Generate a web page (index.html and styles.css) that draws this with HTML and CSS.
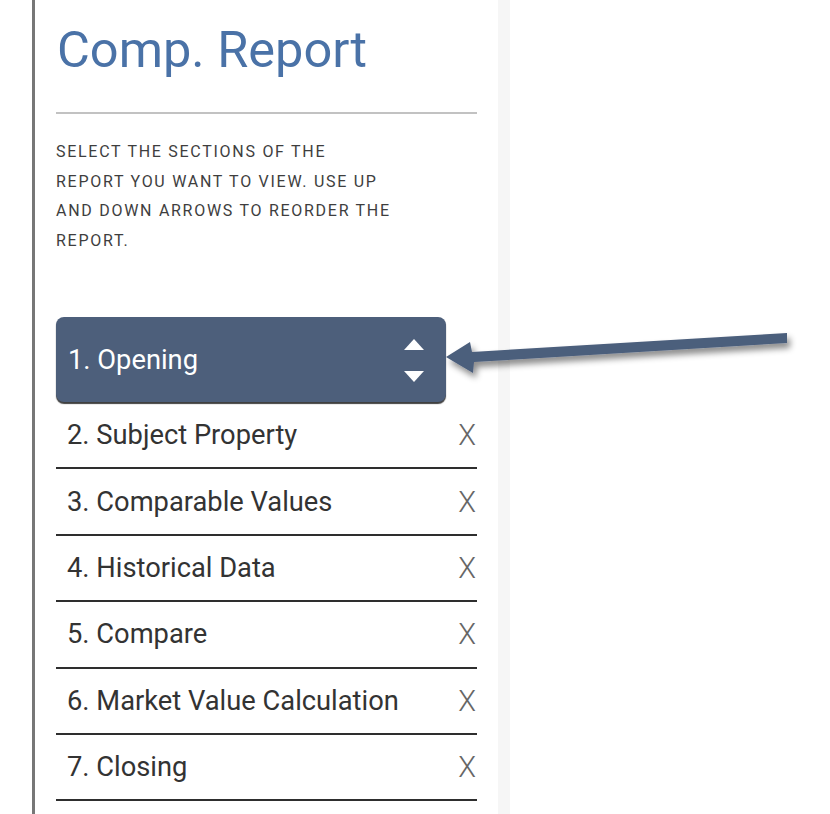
FILE: index.html
```html
<!DOCTYPE html>
<html lang="en">
<head>
<meta charset="utf-8">
<title>Comp. Report</title>
<link rel="stylesheet" href="styles.css">
</head>
<body>
<div class="page">
  <aside class="sidebar">
    <div class="panel">
      <h1 class="title">Comp. Report</h1>
      <hr class="rule">
      <p class="hint">SELECT THE SECTIONS OF THE REPORT YOU WANT TO VIEW. USE UP AND DOWN ARROWS TO REORDER THE REPORT.</p>
      <ul class="sections">
        <li class="item item-active">
          <span class="label">1. Opening</span>
          <span class="sorter">
            <svg class="tri" width="20" height="11" viewBox="0 0 20 11"><polygon points="10,0 20,11 0,11" fill="#fff"/></svg>
            <svg class="tri" width="20" height="11" viewBox="0 0 20 11"><polygon points="0,0 20,0 10,11" fill="#fff"/></svg>
          </span>
        </li>
        <li class="item"><span class="label">2. Subject Property</span><span class="remove">X</span></li>
        <li class="item"><span class="label">3. Comparable Values</span><span class="remove">X</span></li>
        <li class="item"><span class="label">4. Historical Data</span><span class="remove">X</span></li>
        <li class="item"><span class="label">5. Compare</span><span class="remove">X</span></li>
        <li class="item"><span class="label">6. Market Value Calculation</span><span class="remove">X</span></li>
        <li class="item"><span class="label">7. Closing</span><span class="remove">X</span></li>
      </ul>
    </div>
  </aside>
  <div class="gutter"></div>
  <main class="main"></main>
</div>
<svg class="callout" width="830" height="814" viewBox="0 0 830 814">
  <defs>
    <filter id="sh" x="-10%" y="-50%" width="120%" height="250%">
      <feDropShadow dx="3" dy="5" stdDeviation="3" flood-color="#000" flood-opacity="0.45"/>
    </filter>
  </defs>
  <polygon filter="url(#sh)" fill="#4b5e7c" points="446,357 470,342 472,352 787,333 787,343 474,362 473,373"/>
</svg>
</body>
</html>
```
FILE: styles.css
```css
html, body {
  margin: 0;
  padding: 0;
  background: #ffffff;
}
body {
  font-family: Roboto, "Liberation Sans", Arial, sans-serif;
  width: 830px;
  height: 814px;
  overflow: hidden;
  position: relative;
}
.page {
  display: flex;
  height: 814px;
}
.sidebar {
  margin-left: 32px;
  width: 463px;
  border-left: 3px solid #777777;
  background: #ffffff;
}
.panel {
  width: 421px;
  padding: 25px 0 0 21px;
}
.title {
  margin: 0;
  font-size: 50.5px;
  line-height: 50px;
  font-weight: 400;
  color: #4a72a7;
  padding-left: 1px;
}
.rule {
  margin: 37px 0 0 0;
  border: 0;
  height: 2px;
  background: #c2c2c2;
}
.hint {
  margin: 23px 0 0 0;
  width: 340px;
  font-size: 16px;
  line-height: 29.5px;
  letter-spacing: 1.72px;
  color: #3e3e3e;
}
.sections {
  list-style: none;
  margin: 62px 0 0 0;
  padding: 0;
}
.item {
  display: flex;
  align-items: center;
  justify-content: space-between;
  height: 64.4px;
  border-bottom: 2px solid #2e2e2e;
  padding: 0 1px 0 11px;
  font-size: 27.3px;
  color: #333333;
}
.item-active {
  width: 390px;
  height: 85px;
  box-sizing: border-box;
  border: 0;
  border-radius: 8px;
  background: #4d5f7b;
  color: #ffffff;
  box-shadow: 0 2px 1px rgba(0, 0, 0, 0.75);
  padding: 0 22px 0 12px;
  margin-bottom: 1px;
}
.label {
  white-space: nowrap;
}
.sorter {
  display: flex;
  flex-direction: column;
  gap: 21px;
  margin-top: 2px;
}
.tri {
  display: block;
}
.remove {
  font-size: 29px;
  font-weight: 300;
  color: #666666;
}
.gutter {
  width: 12px;
  background: #f6f6f6;
}
.main {
  flex: 1;
  background: #ffffff;
}
.callout {
  position: absolute;
  left: 0;
  top: 0;
  pointer-events: none;
}
```
